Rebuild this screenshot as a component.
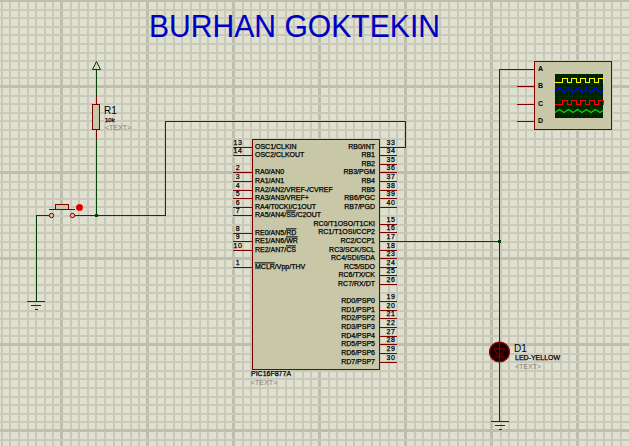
const WIRE = "#004000";
const PIN = "#800000";
const BODY = "#c8c8a8";

const leftPins: [string, number, React.ReactNode][] = [
  ["13", 147, "OSC1/CLKIN"],
  ["14", 155, "OSC2/CLKOUT"],
  ["2", 172, "RA0/AN0"],
  ["3", 181, "RA1/AN1"],
  ["4", 190, "RA2/AN2/VREF-/CVREF"],
  ["5", 198, "RA3/AN3/VREF+"],
  ["6", 207, "RA4/T0CKI/C1OUT"],
  ["7", 215, <>RA5/AN4/<tspan textDecoration="overline">SS</tspan>/C2OUT</>],
  ["8", 233, <>RE0/AN5/<tspan textDecoration="overline">RD</tspan></>],
  ["9", 241, <>RE1/AN6/<tspan textDecoration="overline">WR</tspan></>],
  ["10", 250, <>RE2/AN7/<tspan textDecoration="overline">CS</tspan></>],
  ["1", 267, <><tspan textDecoration="overline">MCLR</tspan>/Vpp/THV</>],
];

const rightPins: [string, number, string][] = [
  ["33", 147, "RB0/INT"],
  ["34", 155, "RB1"],
  ["35", 164, "RB2"],
  ["36", 172, "RB3/PGM"],
  ["37", 181, "RB4"],
  ["38", 190, "RB5"],
  ["39", 198, "RB6/PGC"],
  ["40", 207, "RB7/PGD"],
  ["15", 224, "RC0/T1OSO/T1CKI"],
  ["16", 232, "RC1/T1OSI/CCP2"],
  ["17", 241, "RC2/CCP1"],
  ["18", 250, "RC3/SCK/SCL"],
  ["23", 258, "RC4/SDI/SDA"],
  ["24", 267, "RC5/SDO"],
  ["25", 275, "RC6/TX/CK"],
  ["26", 284, "RC7/RX/DT"],
  ["19", 301, "RD0/PSP0"],
  ["20", 310, "RD1/PSP1"],
  ["21", 318, "RD2/PSP2"],
  ["22", 327, "RD3/PSP3"],
  ["27", 336, "RD4/PSP4"],
  ["28", 344, "RD5/PSP5"],
  ["29", 353, "RD6/PSP6"],
  ["30", 362, "RD7/PSP7"],
];

const gridX = Array.from({ length: 74 }, (_, i) => i);
const gridY = Array.from({ length: 53 }, (_, i) => i);

function square(top: number, bottom: number) {
  let d = `M555 ${bottom}.5`;
  for (let x = 562; x < 600; x += 9) {
    d += ` H${x}.5 V${top}.5 H${x + 5}.5 V${bottom}.5`;
  }
  return d + " H603";
}

function wave(mid: number, amp: number) {
  const pts: string[] = [];
  for (let x = 555; x <= 603; x += 1.5) {
    const t = ((x - 555) % 9) / 9;
    const y = mid + amp * (t < 0.5 ? 1 - 4 * t : -3 + 4 * t);
    pts.push(`${x},${y}`);
  }
  return pts.join(" ");
}

function Ground({ x, y }: { x: number; y: number }) {
  return (
    <g stroke={WIRE} strokeWidth="1" shapeRendering="crispEdges">
      <path d={`M${x - 9} ${y}.5H${x + 9}`} />
      <path d={`M${x - 5} ${y + 4}.5H${x + 5}`} />
      <path d={`M${x - 1} ${y + 8}.5H${x + 2}`} />
    </g>
  );
}

export default function App() {
  return (
    <div className="h-[446px] w-[629px] overflow-hidden bg-[#e0e0d0]">
      <svg width="629" height="446" viewBox="0 0 629 446" className="block font-['Liberation_Sans',sans-serif]">
        {/* paper grid */}
        <g shapeRendering="crispEdges">
          {gridX.map((i) => {
            const x = Math.round(0.8 + 8.6 * i);
            const major = (i - 7) % 10 === 0;
            return <rect key={i} x={x - (major ? 1 : 0)} y="0" width={major ? 3 : 2} height="446" fill={major ? "#bebeae" : "#c9c9b9"} />;
          })}
          {gridY.map((i) => {
            const y = Math.round(8.6 * i);
            const major = i % 10 === 0;
            return <rect key={i} x="0" y={y - (major ? 1 : 0)} width="629" height={major ? 3 : 2} fill={major ? "#bebeae" : "#c9c9b9"} />;
          })}
        </g>

        <text x="149" y="37" fontSize="32" textLength="291" lengthAdjust="spacingAndGlyphs" fill="#0000c0" stroke="#0000c0" strokeWidth="0.1">BURHAN GOKTEKIN</text>

        {/* wires */}
        <g fill="none" stroke={WIRE} strokeWidth="1" shapeRendering="crispEdges">
          <path d="M96.5 69V95M96.5 139V215M83 215.5H165.5V121.5H405.5V147.5H397" />
          <path d="M39 215.5H36.5V301" />
          <path d="M517 69.5H499.5V333M397 241.5H499.5M499.5 368V421" />
        </g>
        <rect x="95" y="214" width="3" height="3" fill={WIRE} />
        <rect x="498" y="240" width="3" height="3" fill={WIRE} />
        <Ground x={36} y={301} />
        <Ground x={500} y={421} />

        {/* power terminal + resistor */}
        <path d="M96.5 61.5L92.5 69.5H100.5Z" fill="none" stroke={WIRE} strokeWidth="1" />
        <path d="M96.5 95V104M96.5 130V139" stroke={PIN} strokeWidth="1" shapeRendering="crispEdges" />
        <rect x="92.5" y="104.5" width="7" height="25" fill={BODY} stroke={PIN} strokeWidth="1" shapeRendering="crispEdges" />
        <text x="104" y="114" fontSize="10" fill="#000">R1</text>
        <text x="105" y="122" fontSize="6" fill="#000" stroke="#000" strokeWidth="0.25">10k</text>
        <text x="105" y="130" fontSize="7" fill="#808080">&lt;TEXT&gt;</text>

        {/* push button */}
        <rect x="55.5" y="204.5" width="13" height="5" fill={BODY} stroke={PIN} strokeWidth="1" shapeRendering="crispEdges" />
        <path d="M49 209.5H75M39 215.5H49M75 215.5H83" stroke={PIN} strokeWidth="1" shapeRendering="crispEdges" />
        <circle cx="51.5" cy="215.5" r="2.2" fill={BODY} stroke={PIN} strokeWidth="1" />
        <circle cx="72.5" cy="215.5" r="2.2" fill={BODY} stroke={PIN} strokeWidth="1" />
        <circle cx="79.5" cy="207.5" r="3.5" fill="#ff0000" />
        <path d="M78.5 205V210M80.5 205V210M77 206.5H82M77 208.5H82" stroke="#a00000" strokeWidth="0.7" />

        {/* microcontroller */}
        <rect x="252.5" y="139.5" width="127" height="230" fill={BODY} stroke={PIN} strokeWidth="1" shapeRendering="crispEdges" />
        <g fontSize="7" fill="#000" stroke="#000" strokeWidth="0.25">
          {leftPins.map(([n, y, label]) => (
            <g key={n}>
              <path d={`M233 ${y}.5H252`} stroke={PIN} strokeWidth="1" shapeRendering="crispEdges" />
              <text x="238" y={y - 2} textAnchor="middle" letterSpacing="0.6">{n}</text>
              <text x="255" y={y + 1.5}>{label}</text>
            </g>
          ))}
          {rightPins.map(([n, y, label]) => (
            <g key={n}>
              <path d={`M380 ${y}.5H397`} stroke={PIN} strokeWidth="1" shapeRendering="crispEdges" />
              <text x="391" y={y - 2} textAnchor="middle" letterSpacing="0.6">{n}</text>
              <text x="375" y={y + 1.5} textAnchor="end">{label}</text>
            </g>
          ))}
        </g>
        <text x="251" y="376" fontSize="7" fill="#000" stroke="#000" strokeWidth="0.25">PIC16F877A</text>
        <text x="251" y="385" fontSize="7" fill="#808080">&lt;TEXT&gt;</text>

        {/* oscilloscope */}
        <path d="M517 69.5H534M517 86.5H534M517 104.5H534M517 121.5H534" stroke={PIN} strokeWidth="1" shapeRendering="crispEdges" />
        <rect x="534.5" y="61.5" width="77" height="68" fill={BODY} stroke={PIN} strokeWidth="1" shapeRendering="crispEdges" />
        <g fontSize="7" fontWeight="700" fill="#000">
          <text x="538" y="71">A</text>
          <text x="538" y="88">B</text>
          <text x="538" y="106">C</text>
          <text x="538" y="123">D</text>
        </g>
        <rect x="555" y="74" width="48" height="44" fill="#002000" />
        <g stroke="#003000" strokeWidth="1" shapeRendering="crispEdges">
          {[559, 564, 568, 572, 577, 581, 585, 590, 594, 598].map((x) => (
            <path key={x} d={`M${x}.5 74V118`} />
          ))}
          {[78, 83, 87, 91, 96, 100, 105, 109, 113].map((y) => (
            <path key={y} d={`M555 ${y}.5H603`} />
          ))}
        </g>
        <g fill="none" strokeWidth="1.3">
          <path d={square(78, 82)} stroke="#ffff00" shapeRendering="crispEdges" />
          <polyline points={wave(90, 2.5)} stroke="#0000ff" />
          <path d={square(100, 104)} stroke="#ff0000" shapeRendering="crispEdges" />
          <polyline points={wave(111, 1.5)} stroke="#00e000" />
        </g>

        {/* LED */}
        <path d="M499.5 333V342M499.5 362V368" stroke={PIN} strokeWidth="1" shapeRendering="crispEdges" />
        <circle cx="499.5" cy="352" r="10" fill="#1c0000" stroke="#a00000" strokeWidth="1.2" />
        <path d="M494 349H505L499.5 356.5ZM494.5 357H504.5M499.5 342V362" fill="none" stroke={PIN} strokeWidth="1" />
        <text x="514" y="352" fontSize="10" fill="#000">D1</text>
        <text x="515" y="360" fontSize="7" fill="#000" stroke="#000" strokeWidth="0.25">LED-YELLOW</text>
        <text x="515" y="369" fontSize="7" fill="#808080">&lt;TEXT&gt;</text>
      </svg>
    </div>
  );
}
